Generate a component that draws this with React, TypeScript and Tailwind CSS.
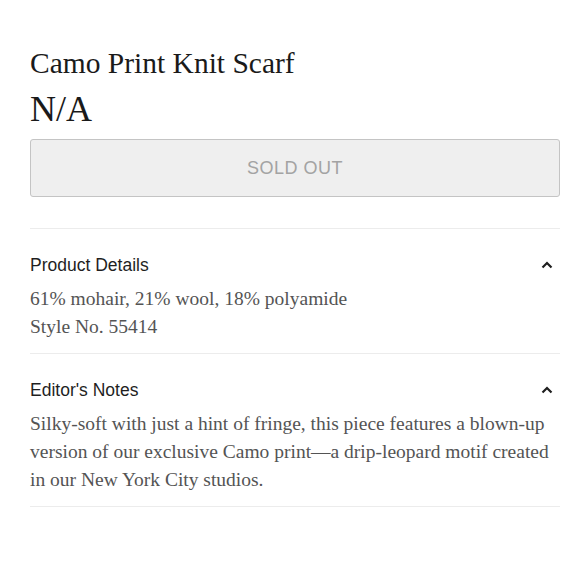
import React from 'react';

const serif = { fontFamily: '"Liberation Serif", "Times New Roman", serif' };
const sans = { fontFamily: '"Liberation Sans", Arial, sans-serif' };

function Chevron() {
  return (
    <svg width="12" height="8" viewBox="0 0 12 8" className="mr-[7px]">
      <polyline points="1.5,6.5 6,2 10.5,6.5" fill="none" stroke="#1f1f1f" strokeWidth="2.2" />
    </svg>
  );
}

function Section({ title, children }: { title: string; children: React.ReactNode }) {
  return (
    <div className="border-t border-[#ececec] pt-[24px] pb-[12px]">
      <div className="flex items-center justify-between h-[24px]">
        <span className="text-[17.5px] text-[#1f1f1f]" style={sans}>
          {title}
        </span>
        <Chevron />
      </div>
      <div className="mt-[8px] text-[19.5px] leading-[28px] text-[#545454]" style={serif}>
        {children}
      </div>
    </div>
  );
}

export default function App() {
  return (
    <div className="w-[580px] h-[580px] bg-white px-[30px] pt-[46px]">
      <div className="w-[530px]">
        <h1 className="text-[29.5px] leading-[34px] text-[#1a1a1a]" style={serif}>
          Camo Print Knit Scarf
        </h1>
        <div className="mt-[9px] text-[36px] leading-[40px] text-[#1a1a1a]" style={serif}>
          N/A
        </div>
        <button
          className="mt-[10px] w-full h-[58px] bg-[#efefef] border border-[#c4c4c4] rounded-[3px] text-[18px] tracking-[0.5px] text-[#a3a3a3]"
          style={sans}
        >
          SOLD OUT
        </button>
        <div className="mt-[31px]">
          <Section title="Product Details">
            <p>61% mohair, 21% wool, 18% polyamide</p>
            <p>Style No. 55414</p>
          </Section>
          <Section title="Editor's Notes">
            <p>
              Silky-soft with just a hint of fringe, this piece features a blown-up version of our
              exclusive Camo print—a drip-leopard motif created in our New York City studios.
            </p>
          </Section>
          <div className="border-t border-[#ececec]" />
        </div>
      </div>
    </div>
  );
}
